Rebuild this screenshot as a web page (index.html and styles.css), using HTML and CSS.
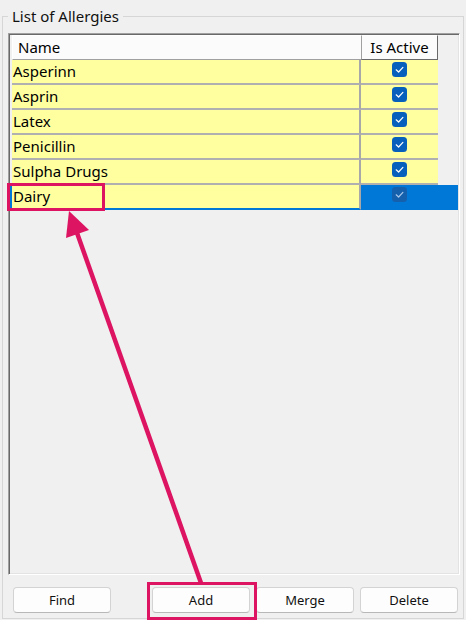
FILE: index.html
```html
<!DOCTYPE html>
<html lang="en">
<head>
  <meta charset="UTF-8">
  <title>List of Allergies</title>
  <link rel="stylesheet" href="styles.css">
</head>
<body>

<fieldset class="group">
  <legend class="group-title">List of Allergies</legend>

  <!-- GRID -->
  <div class="grid">
    <div class="grid-head">
      <div class="rowhead"></div>
      <div class="head-cell name-col">Name</div>
      <div class="head-cell active-col">Is Active</div>
      <div class="filler"></div>
    </div>

    <div class="grid-row">
      <div class="rowhead"></div>
      <div class="cell name-col">Asperinn</div>
      <div class="cell active-col"><span class="check"><svg viewBox="0 0 15 15"><path d="M4.2 7.8 L6.6 10 L10.9 5.4"/></svg></span></div>
      <div class="filler"></div>
    </div>
    <div class="grid-row">
      <div class="rowhead"></div>
      <div class="cell name-col">Asprin</div>
      <div class="cell active-col"><span class="check"><svg viewBox="0 0 15 15"><path d="M4.2 7.8 L6.6 10 L10.9 5.4"/></svg></span></div>
      <div class="filler"></div>
    </div>
    <div class="grid-row">
      <div class="rowhead"></div>
      <div class="cell name-col">Latex</div>
      <div class="cell active-col"><span class="check"><svg viewBox="0 0 15 15"><path d="M4.2 7.8 L6.6 10 L10.9 5.4"/></svg></span></div>
      <div class="filler"></div>
    </div>
    <div class="grid-row">
      <div class="rowhead"></div>
      <div class="cell name-col">Penicillin</div>
      <div class="cell active-col"><span class="check"><svg viewBox="0 0 15 15"><path d="M4.2 7.8 L6.6 10 L10.9 5.4"/></svg></span></div>
      <div class="filler"></div>
    </div>
    <div class="grid-row">
      <div class="rowhead"></div>
      <div class="cell name-col">Sulpha Drugs</div>
      <div class="cell active-col"><span class="check"><svg viewBox="0 0 15 15"><path d="M4.2 7.8 L6.6 10 L10.9 5.4"/></svg></span></div>
      <div class="filler"></div>
    </div>
    <div class="grid-row selected">
      <div class="rowhead"></div>
      <div class="cell name-col">Dairy</div>
      <div class="cell active-col"><span class="check"><svg viewBox="0 0 15 15"><path d="M4.2 7.8 L6.6 10 L10.9 5.4"/></svg></span></div>
      <div class="filler"></div>
    </div>
  </div>

  <!-- BUTTONS -->
  <div class="buttons">
    <button class="btn">Find</button>
    <div class="btn-group">
      <button class="btn">Add</button>
      <button class="btn">Merge</button>
      <button class="btn">Delete</button>
    </div>
  </div>
</fieldset>

<!-- callout drawn over the form -->
<svg class="annotations" width="466" height="620" viewBox="0 0 466 620">
  <rect x="8.5" y="184.5" width="95" height="25" />
  <rect x="148.5" y="583.5" width="107" height="35" />
  <line x1="201" y1="583" x2="76" y2="230" />
  <polygon points="69,211 89,230 66,238" />
</svg>

</body>
</html>
```

FILE: styles.css
```css
html, body {
  margin: 0;
  width: 466px;
  height: 620px;
  overflow: hidden;
}
body {
  background: #f0f0f0;
  font-family: "Noto Sans", "Open Sans", sans-serif;
  color: #000;
  position: relative;
}
.group {
  margin: 6px 0 0 2px;
  width: 462px;
  box-sizing: border-box;
  border: 1px solid #d6d6d6;
  padding: 7px 3px 5px 5px;
  min-width: 0;
}
.group-title {
  font-size: 15px;
  line-height: 20px;
  padding: 0 4px;
  color: #111;
}

/* grid */
.grid {
  height: 542px;
  box-sizing: border-box;
  border: 1px solid;
  border-color: #a0a0a0 #ffffff #ffffff #a0a0a0;
  box-shadow: inset 1px 1px 0 #696969, inset -1px -1px 0 #e3e3e3;
  padding: 1px 1px 0 1px;
}
.grid-head, .grid-row {
  display: grid;
  grid-template-columns: 2px 349px 77px 1fr;
  height: 25px;
}
.head-cell {
  font-size: 15px;
  line-height: 23px;
  background: #fbfbfb;
  border-top: 1px solid #ffffff;
  border-bottom: 1px solid #a0a0a0;
}
.head-cell.name-col {
  padding-left: 5px;
  border-left: 1px solid #ffffff;
}
.head-cell.active-col {
  text-align: center;
  border-left: 1px solid #a0a0a0;
  border-right: 1px solid #696969;
  border-bottom-color: #696969;
}
.cell {
  font-size: 15px;
  line-height: 23px;
  background: #ffffa0;
  border-bottom: 2px solid #b0b0b0;
}
.cell.name-col {
  padding-left: 1px;
  border-right: 2px solid #a8a8a8;
}
.cell.active-col {
  display: flex;
  justify-content: center;
  align-items: flex-start;
  padding-top: 2px;
  box-sizing: border-box;
}
.check {
  width: 15px;
  height: 15px;
  border-radius: 3.5px;
  background: #0860bd;
  display: block;
}
.check svg {
  display: block;
  width: 15px;
  height: 15px;
}
.check path {
  fill: none;
  stroke: #ffffff;
  stroke-width: 1.2;
  stroke-linecap: round;
  stroke-linejoin: round;
}

/* selected row */
.selected .rowhead { background: #0078d7; }
.selected .cell.name-col { border-bottom-color: #0078d7; }
.selected .cell.active-col,
.selected .filler {
  background: #0078d7;
  border-bottom-color: #0078d7;
}
.selected .check { background: #1560ad; }
.selected .check path { stroke: #a9c8ea; }

/* buttons */
.buttons {
  display: flex;
  margin-top: 12px;
  padding: 0 2px 0 5px;
}
.btn-group {
  display: flex;
  gap: 6px;
  margin-left: auto;
}
.btn {
  width: 98px;
  height: 26px;
  padding: 0;
  background: #fdfdfd;
  border: 1px solid #d3d3d3;
  border-bottom-color: #b8b8b8;
  border-radius: 4px;
  font-family: "Noto Sans", "Open Sans", sans-serif;
  font-size: 13px;
  color: #111;
}

/* annotation overlay */
.annotations {
  position: absolute;
  top: 0;
  left: 0;
  pointer-events: none;
}
.annotations rect {
  fill: none;
  stroke: #dc1461;
  stroke-width: 3;
}
.annotations line {
  stroke: #dc1461;
  stroke-width: 4.5;
}
.annotations polygon {
  fill: #dc1461;
}
```
